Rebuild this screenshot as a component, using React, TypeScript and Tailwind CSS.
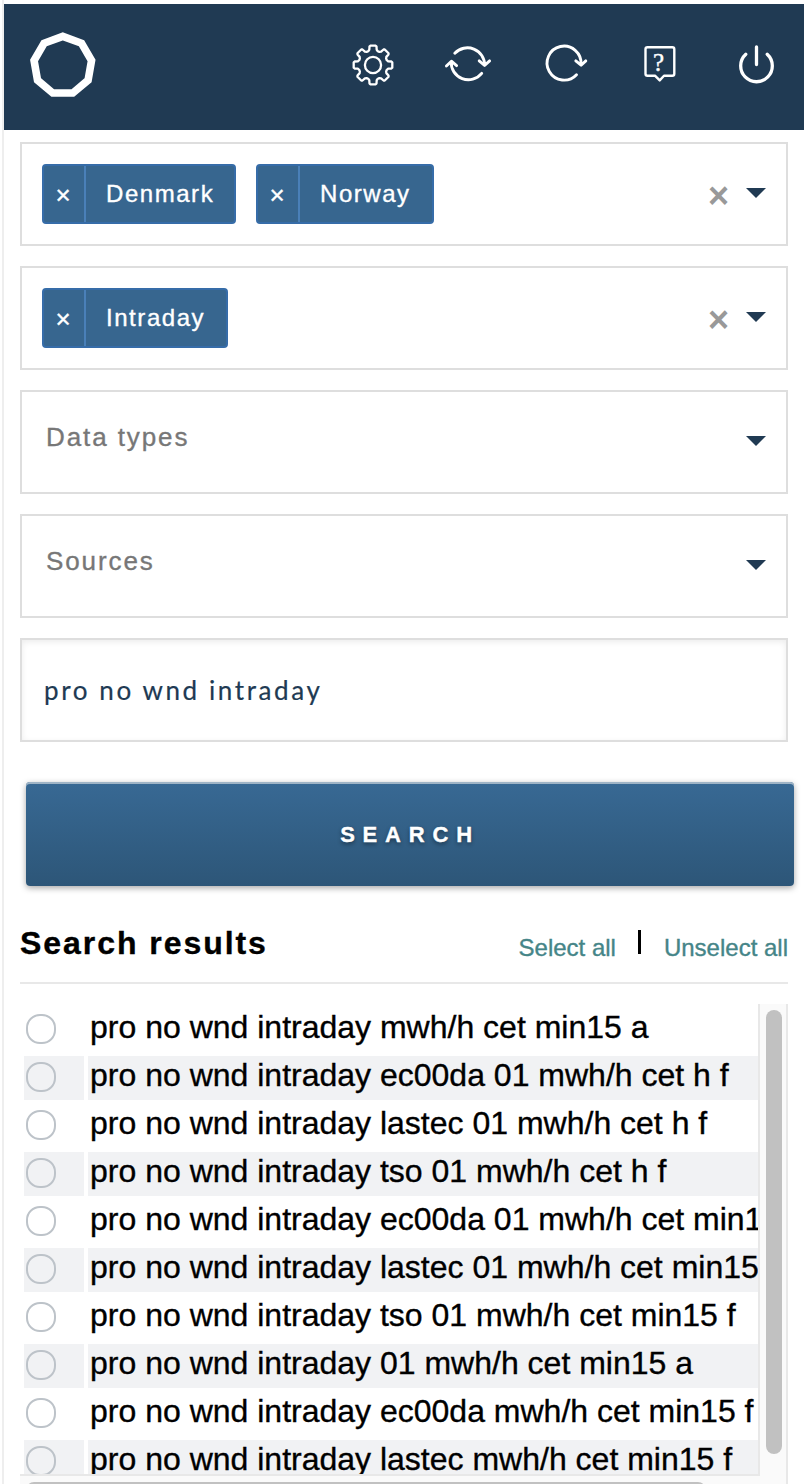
import type { ReactNode } from "react";

const results = [
  "pro no wnd intraday mwh/h cet min15 a",
  "pro no wnd intraday ec00da 01 mwh/h cet h f",
  "pro no wnd intraday lastec 01 mwh/h cet h f",
  "pro no wnd intraday tso 01 mwh/h cet h f",
  "pro no wnd intraday ec00da 01 mwh/h cet min15 f",
  "pro no wnd intraday lastec 01 mwh/h cet min15 f",
  "pro no wnd intraday tso 01 mwh/h cet min15 f",
  "pro no wnd intraday 01 mwh/h cet min15 a",
  "pro no wnd intraday ec00da mwh/h cet min15 f",
  "pro no wnd intraday lastec mwh/h cet min15 f",
];

function Icon({ viewBox, children }: { viewBox: string; children: ReactNode }) {
  return (
    <svg
      className="size-12 shrink-0"
      viewBox={viewBox}
      fill="none"
      stroke="white"
      strokeWidth="2.9"
      strokeLinecap="round"
      strokeLinejoin="round"
    >
      {children}
    </svg>
  );
}

function polygonPoints(cx: number, cy: number, r: number, n: number) {
  return Array.from({ length: n }, (_, i) => {
    const a = (i * 2 * Math.PI) / n;
    return `${(cx + r * Math.sin(a)).toFixed(2)},${(cy - r * Math.cos(a)).toFixed(2)}`;
  }).join(" ");
}

const tooth = [
  [-4.8, -13.8],
  [-3.7, -15.2],
  [-3.5, -18.4],
  [-2.7, -19.3],
  [2.7, -19.3],
  [3.5, -18.4],
  [3.7, -15.2],
  [4.8, -13.8],
];

const gearPoints = Array.from({ length: 8 }, (_, k) => {
  const a = (k * Math.PI) / 4;
  return tooth
    .map(([x, y]) => {
      const px = 373 + x * Math.cos(a) - y * Math.sin(a);
      const py = 65 + x * Math.sin(a) + y * Math.cos(a);
      return `${px.toFixed(2)},${py.toFixed(2)}`;
    })
    .join(" ");
}).join(" ");

function Header() {
  return (
    <header className="flex h-[126px] items-center justify-between bg-[#203a53] pl-[23px] pr-6">
      <svg className="size-[72px]" viewBox="27 31 72 72" fill="none">
        <polygon points={polygonPoints(62.8, 65.6, 29.2, 9)} stroke="white" strokeWidth="7.6" />
      </svg>
      <nav className="flex gap-12">
        <Icon viewBox="348 43 48 48">
          <polygon points={gearPoints} strokeWidth="2.3" />
          <circle cx="373" cy="65" r="8.1" strokeWidth="2.3" />
        </Icon>
        <Icon viewBox="444 43 48 48">
          <path d="M454.8 53.3A17.2 17.2 0 0 1 484.6 65.4M479.2 60.9L484.6 65.4L489.6 60.9" />
          <path d="M481.7 73.4A17.2 17.2 0 0 1 451.2 61.6M446.4 66L451.4 61.2L456.6 65.6" />
        </Icon>
        <Icon viewBox="540 43 48 48">
          <path d="M576.5 74.7A17 17 0 1 1 581 64.5M575.8 60.9L581.1 65.2L585.8 60.9" />
        </Icon>
        <Icon viewBox="636 43 48 48">
          <path
            d="M647.5 47.2H672.3Q674.3 47.2 674.3 49.2V73.8Q674.3 75.8 672.3 75.8H664L659.7 80.4L655.2 75.8H647.5Q645.5 75.8 645.5 73.8V49.2Q645.5 47.2 647.5 47.2Z"
            strokeWidth="2.4"
          />
          <text
            x="658.6"
            y="71.3"
            textAnchor="middle"
            fill="white"
            stroke="white"
            strokeWidth="0.4"
            fontSize="25"
            fontFamily="Liberation Serif, serif"
          >
            ?
          </text>
        </Icon>
        <Icon viewBox="732 43 48 48">
          <path d="M745.8 54.3A15.8 15.8 0 1 0 767.2 54.3M756.5 47V64.5" strokeWidth="3.3" />
        </Icon>
      </nav>
    </header>
  );
}

function Tag({ label, width }: { label: string; width: string }) {
  return (
    <div
      className={`flex h-[60px] ${width} rounded border-2 border-[#366ca8] bg-[#37668f] text-2xl text-white`}
    >
      <span className="flex w-[42px] items-center justify-center border-r-2 border-[#4a80b8] pr-0.5 pt-[3px] text-[26px]">
        ×
      </span>
      <span className="pl-5 leading-[56px] tracking-[1.55px]">{label}</span>
    </div>
  );
}

function Caret() {
  return (
    <svg className="h-[10px] w-5" viewBox="0 0 20 10">
      <path d="M0 0H20L10 10Z" fill="#203a53" />
    </svg>
  );
}

function SelectBox({ children, clearable }: { children: ReactNode; clearable?: boolean }) {
  return (
    <div className="flex h-[104px] items-center border-2 border-[#dedede] bg-white pl-5 pr-5">
      <div className="flex flex-1 gap-5">{children}</div>
      {clearable ? (
        <div className="flex items-center">
          <span className="mr-[17px] mt-[3px] text-[36px] font-bold leading-10 text-[#999999] [-webkit-text-stroke:0px]">
            ×
          </span>
          <span className="-mt-0.5">
            <Caret />
          </span>
        </div>
      ) : (
        <span className="-mt-0.5">
          <Caret />
        </span>
      )}
    </div>
  );
}

function Placeholder({ text }: { text: string }) {
  return (
    <span className="-mt-2.5 pl-1 text-[26px] leading-10 tracking-[1.9px] text-[#777777]">{text}</span>
  );
}

export default function App() {
  return (
    <div
      className="h-[1484px] w-[804px] overflow-hidden bg-white pl-0.5 text-black [-webkit-text-stroke:0.35px]"
      style={{ fontFamily: '"Liberation Sans", Arial, sans-serif' }}
    >
      <div className="flex h-full flex-col border-l-2 border-[#eeeeee] pt-1">
        <Header />
        <main className="flex min-h-0 flex-1 flex-col pl-4 pr-4 pt-3">
          <div className="flex flex-col gap-5">
            <SelectBox clearable>
              <Tag label="Denmark" width="w-[194px]" />
              <Tag label="Norway" width="w-[178px]" />
            </SelectBox>
            <SelectBox clearable>
              <Tag label="Intraday" width="w-[186px]" />
            </SelectBox>
            <SelectBox>
              <Placeholder text="Data types" />
            </SelectBox>
            <SelectBox>
              <Placeholder text="Sources" />
            </SelectBox>
            <input
              className="h-[104px] border-2 border-[#dedede] bg-white pl-[22px] text-[26px] tracking-[2.6px] text-[#203a53] shadow-[inset_0_2px_6px_rgba(0,0,0,0.08)] outline-none [-webkit-text-stroke:0.2px]"
              style={{ fontFamily: "Lato, sans-serif" }}
              defaultValue="pro no wnd intraday"
            />
          </div>
          <button className="-mr-1.5 ml-1.5 mt-10 h-[104px] shrink-0 rounded bg-linear-to-b from-[#386994] to-[#2d5678] text-[22px] font-bold tracking-[7.8px] text-white shadow-[inset_0_2px_0_#9fb4c6,0_2px_6px_rgba(0,0,0,0.35)] [text-shadow:0_2px_4px_rgba(0,0,0,0.45)]">
            SEARCH
          </button>
          <div className="mt-8 flex h-[66px] shrink-0 justify-between border-b-2 border-[#e8e8e8]">
            <h2 className="text-[32px] font-bold leading-[50px] tracking-[1.95px]">Search results</h2>
            <div className="flex text-2xl leading-[60px] text-[#458588]">
              <a>Select all</a>
              <span className="ml-[22px] mr-[23px] mt-3 h-6 w-[3px] bg-black" />
              <a>Unselect all</a>
            </div>
          </div>
          <div className="mt-5 flex h-[480px] shrink-0">
            <div className="flex w-[738px] flex-col">
              <ul className="flex h-[470px] flex-col gap-1 overflow-hidden pl-1 pt-1">
                {results.map((name, i) => (
                  <li key={name} className="flex h-11 shrink-0 gap-1">
                    <span
                      className={`flex w-[60px] shrink-0 items-center pl-0.5 ${i % 2 ? "bg-[#f1f2f4]" : "bg-white"}`}
                    >
                      <span className="-mt-0.5 size-[30px] rounded-[14px] border-2 border-[#bdc3c9]" />
                    </span>
                    <span
                      className={`flex-1 whitespace-nowrap pl-0.5 text-[32px] leading-[38px] ${i % 2 ? "bg-[#f1f2f4]" : "bg-white"}`}
                    >
                      {name}
                    </span>
                  </li>
                ))}
              </ul>
              <div className="h-[10px] overflow-hidden border-t-2 border-[#e8e8e8] bg-[#fafafa] pl-1.5 pt-1.5">
                <div className="h-4 w-[680px] rounded-full bg-[#c1c1c1]" />
              </div>
            </div>
            <div className="flex w-[30px] flex-col">
              <div className="h-[472px] border-x-2 border-[#e8e8e8] bg-[#fafafa] pl-1.5 pt-1.5">
                <div className="h-[444px] w-4 rounded-full bg-[#c1c1c1]" />
              </div>
              <div className="h-2 border-r-2 border-[#e8e8e8] bg-[#fafafa]" />
            </div>
          </div>
        </main>
      </div>
    </div>
  );
}
